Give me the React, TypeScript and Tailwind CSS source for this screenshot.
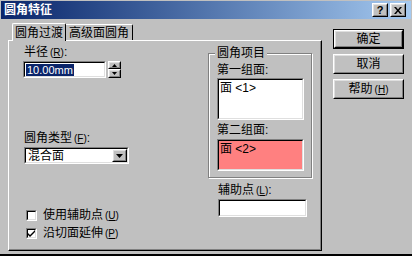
const font = "font-['Liberation_Sans','Noto_Sans_CJK_SC',sans-serif]";

function Raised({ children, className = '' }: { children?: React.ReactNode; className?: string }) {
  return (
    <div className={`border border-t-white border-l-white border-r-black border-b-black ${className}`}>
      <div className="h-full w-full border border-t-[#dfdfdf] border-l-[#dfdfdf] border-r-[#808080] border-b-[#808080] flex items-center justify-center">
        {children}
      </div>
    </div>
  );
}

function Sunken({ children, className = '' }: { children?: React.ReactNode; className?: string }) {
  return (
    <div className={`border border-t-[#808080] border-l-[#808080] border-r-white border-b-white ${className}`}>
      <div className="h-full w-full border border-t-black border-l-black border-r-[#dfdfdf] border-b-[#dfdfdf] bg-white">
        {children}
      </div>
    </div>
  );
}

function Key({ k }: { k: string }) {
  return (
    <span className="text-[10px] ml-[2px]">
      (<span className="underline">{k}</span>)
    </span>
  );
}

function Btn({ label, def }: { label: React.ReactNode; def?: boolean }) {
  return (
    <div className={`w-[71px] h-[20px] ${def ? 'border border-black' : ''}`}>
      <Raised className="h-full w-full">
        <span className="text-[12px] leading-[14px] text-black">{label}</span>
      </Raised>
    </div>
  );
}

function Check({ checked, label }: { checked?: boolean; label: React.ReactNode }) {
  return (
    <div className="flex items-center h-[18px]">
      <div className="w-[11px] h-[11px] border border-t-[#808080] border-l-[#808080] border-r-white border-b-white">
        <div className="w-full h-full border border-t-black border-l-black border-r-[#dfdfdf] border-b-[#dfdfdf] bg-white flex items-center justify-center">
          {checked && (
            <svg width="7" height="7" viewBox="0 0 7 7">
              <path d="M0 3 L2 5 L7 0 L7 2 L2 7 L0 5 Z" fill="black" />
            </svg>
          )}
        </div>
      </div>
      <span className="ml-[6px] text-[12px] leading-[14px]">{label}</span>
    </div>
  );
}

export default function App() {
  return (
    <div className={`${font} w-[412px] h-[256px] bg-[#c0c0c0] text-black border-b-[2px] border-black flex flex-col overflow-hidden`}>
      <div className="h-[18px] mx-[1px] mt-[1px] flex items-center bg-linear-to-r from-[#0a246a] to-[#a6caf0] pl-[3px] pr-[5px]">
        <span className="text-white text-[12px] font-bold leading-[14px] flex-1">圆角特征</span>
        <Raised className="w-[16px] h-[14px] bg-[#c0c0c0]">
          <span className="text-[11px] font-bold leading-[10px]">?</span>
        </Raised>
        <Raised className="w-[16px] h-[14px] bg-[#c0c0c0] ml-[2px]">
          <svg width="8" height="7" viewBox="0 0 8 7">
            <path d="M0 0h2l2 2.5L6 0h2L5 3.5 8 7H6L4 4.5 2 7H0l3-3.5z" fill="black" />
          </svg>
        </Raised>
      </div>

      <div className="flex flex-1">
        <div className="ml-[8px] mt-[3px] w-[314px] flex flex-col">
          <div className="flex items-end h-[18px] pl-[4px]">
            <div className="h-[18px] w-[54px] bg-[#c0c0c0] border-t border-l border-white border-r border-r-black rounded-t-[2px] flex items-center justify-center relative z-10 -mb-[1px]">
              <span className="text-[12px] leading-[14px]">圆角过渡</span>
            </div>
            <div className="h-[16px] w-[67px] border-t border-white border-r border-r-black rounded-tr-[2px] flex items-center justify-center">
              <span className="text-[12px] leading-[14px]">高级面圆角</span>
            </div>
          </div>
          <div className="h-[211px] border border-t-white border-l-white border-r-black border-b-black">
            <div className="h-full border-r border-b border-[#808080] flex">
              <div className="w-[190px] flex flex-col pl-[14px] pt-[4px]">
                <div className="text-[12px] leading-[14px] pl-[1px]">
                  半径<Key k="R" />:
                </div>
                <div className="flex mt-[1px]">
                  <Sunken className="w-[83px] h-[17px]">
                    <div className="flex items-center h-full pl-[1px]">
                      <span className="bg-[#0a246a] text-white text-[11px] leading-[12px] px-[1px]">10.00mm</span>
                    </div>
                  </Sunken>
                  <div className="ml-[2px] w-[13px] h-[17px] flex flex-col">
                    <Raised className="h-[8px] w-full">
                      <svg width="5" height="3" viewBox="0 0 5 3"><path d="M2.5 0L5 3H0z" fill="black" /></svg>
                    </Raised>
                    <Raised className="h-[9px] w-full">
                      <svg width="5" height="3" viewBox="0 0 5 3"><path d="M0 0h5L2.5 3z" fill="black" /></svg>
                    </Raised>
                  </div>
                </div>
                <div className="text-[12px] leading-[14px] mt-[53px] pl-[1px]">
                  圆角类型<Key k="F" />:
                </div>
                <Sunken className="w-[105px] h-[17px] mt-[1px] ml-[1px]">
                  <div className="flex h-full items-center">
                    <span className="flex-1 text-[12px] leading-[14px] pl-[2px]">混合面</span>
                    <Raised className="w-[15px] h-full bg-[#c0c0c0]">
                      <svg width="7" height="4" viewBox="0 0 7 4"><path d="M0 0h7L3.5 4z" fill="black" /></svg>
                    </Raised>
                  </div>
                </Sunken>
                <div className="mt-[42px] pl-[3px] flex flex-col">
                  <Check label={<>使用辅助点<Key k="U" /></>} />
                  <Check checked label={<>沿切面延伸<Key k="P" /></>} />
                </div>
              </div>
              <div className="flex flex-col pt-[12px] pl-[9px]">
                <div className="relative w-[104px] h-[125px] border border-[#808080] shadow-[1px_1px_0_white,inset_1px_1px_0_white] pl-[8px] pt-[9px]">
                  <span className="absolute -top-[8px] left-[6px] bg-[#c0c0c0] px-[2px] text-[12px] leading-[14px]">圆角项目</span>
                  <div className="text-[12px] leading-[14px]">第一组面:</div>
                  <Sunken className="w-[87px] h-[42px] mt-[1px]">
                    <div className="text-[12px] leading-[14px] pl-[1px] pt-[1px]">面 &lt;1&gt;</div>
                  </Sunken>
                  <div className="text-[12px] leading-[14px] mt-[3px]">第二组面:</div>
                  <div className="w-[87px] h-[32px] mt-[2px] border border-t-[#808080] border-l-[#808080] border-r-white border-b-white">
                    <div className="h-full border border-t-black border-l-black border-r-[#dfdfdf] border-b-[#dfdfdf] bg-[#ff8080]">
                      <div className="text-[12px] leading-[14px] pl-[1px] pt-[1px]">面 &lt;2&gt;</div>
                    </div>
                  </div>
                </div>
                <div className="text-[12px] leading-[14px] mt-[5px] pl-[10px]">
                  辅助点<Key k="L" />:
                </div>
                <Sunken className="w-[89px] h-[18px] mt-[1px] ml-[10px]" />
              </div>
            </div>
          </div>
        </div>

        <div className="ml-[11px] mt-[10px] flex flex-col gap-[5px]">
          <Btn label="确定" def />
          <Btn label="取消" />
          <Btn label={<>帮助<Key k="H" /></>} />
        </div>
      </div>
    </div>
  );
}
